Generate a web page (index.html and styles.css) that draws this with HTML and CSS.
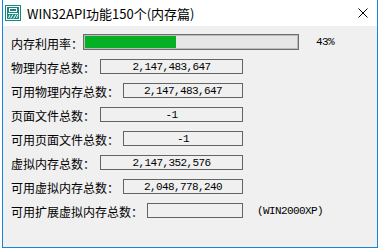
FILE: index.html
```html
<!DOCTYPE html>
<html>
<head>
<meta charset="utf-8">
<link rel="stylesheet" href="styles.css">
</head>
<body>
<div class="window">
  <div class="titlebar">
    <svg class="app-icon" width="16" height="16" viewBox="0 0 16 16">
      <rect width="16" height="16" fill="#17877f"/>
      <rect x="1.5" y="1.5" width="13" height="13" fill="none" stroke="#fff" stroke-width="1"/>
      <rect x="4.5" y="3.5" width="7" height="3" fill="none" stroke="#fff" stroke-width="1"/>
      <path d="M3 8.5H13M5 10L3.5 13M8 9.5L5.5 13.5M11 9.5L8.5 13.5M13 9.5L11.5 13" stroke="#fff" stroke-width="1" fill="none"/>
    </svg>
    <span class="title">WIN32API功能150个(内存篇)</span>
    <svg class="close" width="10" height="10" viewBox="0 0 10 10">
      <path d="M0.5 0.5L9.5 9.5M9.5 0.5L0.5 9.5" stroke="#000" stroke-width="1" fill="none"/>
    </svg>
  </div>
  <div class="client">
    <div class="row first">
      <span class="label w6">内存利用率：</span>
      <div class="progress"><div class="fill" style="width:43%"></div></div>
      <span class="pct">43%</span>
    </div>
    <div class="row">
      <span class="label w7">物理内存总数：</span>
      <div class="field">2,147,483,647</div>
    </div>
    <div class="row">
      <span class="label w9">可用物理内存总数：</span>
      <div class="field">2,147,483,647</div>
    </div>
    <div class="row">
      <span class="label w7">页面文件总数：</span>
      <div class="field">-1</div>
    </div>
    <div class="row">
      <span class="label w9">可用页面文件总数：</span>
      <div class="field">-1</div>
    </div>
    <div class="row">
      <span class="label w7">虚拟内存总数：</span>
      <div class="field">2,147,352,576</div>
    </div>
    <div class="row">
      <span class="label w9">可用虚拟内存总数：</span>
      <div class="field">2,048,778,240</div>
    </div>
    <div class="row last">
      <span class="label w11">可用扩展虚拟内存总数：</span>
      <div class="field fixed"></div>
      <span class="note">(WIN2000XP)</span>
    </div>
  </div>
</div>
</body>
</html>
```

FILE: styles.css
```css
html, body {
  margin: 0;
  padding: 0;
  background: #ffffff;
}

.window {
  margin-left: 2px;
  width: 376px;
  height: 248px;
  box-sizing: border-box;
  border: 1px solid #1883d7;
  border-top: none;
  display: flex;
  flex-direction: column;
}

.titlebar {
  height: 26px;
  flex: none;
  background: #ffffff;
  display: flex;
  align-items: center;
  padding-left: 2px;
  padding-right: 9px;
}

.app-icon {
  flex: none;
  display: block;
}

.title {
  margin-left: 6px;
  font-family: "Noto Sans CJK SC", "Noto Sans", sans-serif;
  font-size: 13px;
  color: #000;
  white-space: nowrap;
}

.close {
  flex: none;
  display: block;
  margin-left: auto;
}

.client {
  flex: 1;
  background: #f0f0f0;
  padding: 8px 0 0 8px;
}

.row {
  display: flex;
  align-items: center;
  width: 232px;
  height: 15px;
  margin-top: 9px;
}

.row.first {
  height: 16px;
  margin-top: 0;
  margin-bottom: 2px;
  width: auto;
}

.row.last {
  width: auto;
}

.label {
  flex: none;
  font-family: "Noto Sans CJK SC", sans-serif;
  font-size: 12px;
  line-height: 15px;
  color: #000;
  white-space: nowrap;
  padding-top: 2px;
}

.w6 { width: 72px; }
.w7 { width: 89px; }
.w9 { width: 112px; }
.w11 { width: 136px; }

.progress {
  flex: none;
  width: 216px;
  height: 16px;
  box-sizing: border-box;
  border: 1px solid #6d6d6d;
  background: #e6e6e6;
  padding: 1px;
  box-shadow: inset 0 0 0 1px #bcbcbc;
  display: flex;
}

.fill {
  height: 100%;
  background: #06b025;
}

.pct {
  margin-left: 17px;
  font-family: "Liberation Mono", monospace;
  font-size: 11px;
  letter-spacing: -0.6px;
  color: #000;
}

.field {
  flex: 1;
  height: 15px;
  box-sizing: border-box;
  border: 1px solid #646464;
  display: flex;
  align-items: center;
  justify-content: center;
  font-family: "Liberation Mono", monospace;
  font-size: 11px;
  letter-spacing: -0.6px;
  color: #000;
}

.field.fixed {
  flex: none;
  width: 96px;
}

.note {
  flex: none;
  margin-left: 14px;
  font-family: "Liberation Mono", monospace;
  font-size: 11px;
  letter-spacing: -0.6px;
  color: #000;
  white-space: nowrap;
}
```
